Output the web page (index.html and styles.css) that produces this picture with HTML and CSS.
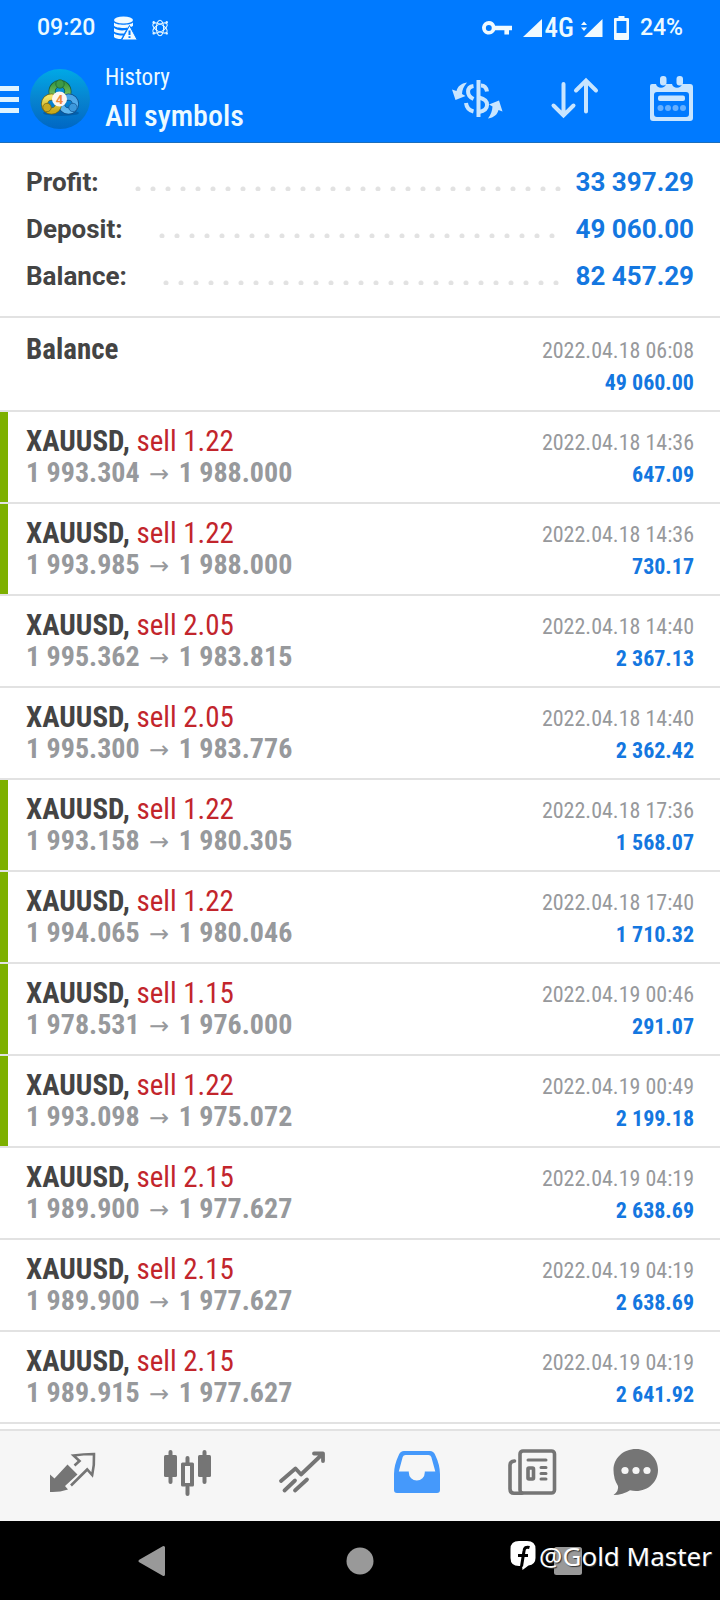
FILE: index.html
```html
<!DOCTYPE html>
<html lang="en">
<head>
<meta charset="utf-8">
<meta name="viewport" content="width=device-width, initial-scale=1">
<title>History</title>
<link rel="stylesheet" href="styles.css">
</head>
<body>
<div class="screen">
  <header class="top">
    <div class="status">
      <div class="status-left">
        <span>09:20</span>
        <svg class="st-db" viewBox="0 0 24 24" width="24" height="24" aria-hidden="true">
          <ellipse cx="10.500" cy="4" rx="9.500" ry="3.600" fill="#f0faff"/>
          <path d="M1 6.500c2 3 17 3 19 0v3.200c-2 3-17 3-19 0zM1 12c3 2.500 8 2.800 12 2l-2 3.500c-4 .2-8-.4-10-2zM1 17.500c2 1.500 5 2 9 2l-2 3.500c-3 0-6-.6-7-2z" fill="#f0faff"/>
          <path d="M16.500 9.500L24.300 24H8.700z" fill="#f0faff" stroke="#007aff" stroke-width="1"/>
          <path d="M16.500 14.500v4.500M16.500 20.300v1.800" stroke="#007aff" stroke-width="2"/>
        </svg>
        <svg class="st-atom" viewBox="0 0 20 20" width="18" height="20" fill="none" stroke="#e4f6ff" stroke-width="1.200" aria-hidden="true">
          <ellipse cx="10" cy="10" rx="4" ry="8.600"/>
          <ellipse cx="10" cy="10" rx="4" ry="9" transform="rotate(60 10 10)"/>
          <ellipse cx="10" cy="10" rx="4" ry="9" transform="rotate(120 10 10)"/>
          <circle cx="10" cy="10" r="3.400" fill="#007aff" stroke="none"/>
          <g fill="#e4f6ff" stroke="none"><circle cx="3" cy="3.500" r="1.300"/><circle cx="17.500" cy="3.500" r="1.300"/><circle cx="3" cy="16" r="1.300"/><circle cx="17.500" cy="16" r="1.300"/></g>
        </svg>
      </div>
      <div class="status-right">
        <svg viewBox="0 0 30 14" width="30" height="14" aria-hidden="true"><path fill="#f0faff" fill-rule="evenodd" d="M6.800 0a6.800 6.800 0 0 1 6.400 4.800H30v4.400h-3V13.500h-4.600V9.200h-9.200A6.800 6.800 0 1 1 6.800 0zm0 4a2.900 2.900 0 1 0 0 5.900 2.900 2.900 0 0 0 0-5.900z"/></svg>
        <span class="signal">
          <svg viewBox="0 0 19 18" width="19" height="18" aria-hidden="true"><path d="M19 0v18H0z" fill="#f0faff"/></svg>
          <span class="net">4G</span>
          <svg class="sig2" viewBox="0 0 22 18" width="22" height="18" aria-hidden="true"><path d="M21.500 0v18H3zM0 6l3-3.500L6 6zM0 8.500l3 3.500 3-3.500z" fill="#f0faff"/></svg>
        </span>
        <svg viewBox="0 0 15 24" width="15" height="24" aria-hidden="true"><path fill="#f0faff" fill-rule="evenodd" d="M4.500 0h6v2H14a1 1 0 0 1 1 1v20a1 1 0 0 1-1 1H1a1 1 0 0 1-1-1V3a1 1 0 0 1 1-1h3.500zM2.600 5v12h9.800V5z"/></svg>
        <span>24%</span>
      </div>
    </div>
    <div class="appbar">
      <button class="menu" aria-label="Menu"><span></span><span></span><span></span></button>
      <svg class="logo" viewBox="0 0 60 60" width="60" height="60" role="img" aria-label="MetaTrader 4">
        <defs>
          <linearGradient id="bg" x1="0" y1="0" x2="0" y2="1"><stop offset="0" stop-color="#00a9e6"/><stop offset=".5" stop-color="#0784d0"/><stop offset="1" stop-color="#0067c4"/></linearGradient>
          <linearGradient id="gr" x1="0" y1="0" x2="0" y2="1"><stop offset="0" stop-color="#3c9a40"/><stop offset="1" stop-color="#8fce6a"/></linearGradient>
          <linearGradient id="ye" x1="0" y1="0" x2="0" y2="1"><stop offset="0" stop-color="#f0e46a"/><stop offset="1" stop-color="#c9a91c"/></linearGradient>
          <linearGradient id="bl" x1="0" y1="0" x2="0" y2="1"><stop offset="0" stop-color="#4ba6e8"/><stop offset="1" stop-color="#62b8f0"/></linearGradient>
        </defs>
        <circle cx="30" cy="30" r="30" fill="url(#bg)"/>
        <ellipse cx="31" cy="44" rx="18" ry="3" fill="#003f80" opacity=".4"/>
        <circle cx="30" cy="22.500" r="8" fill="none" stroke="#1c5a3a" stroke-width="7"/>
        <circle cx="30" cy="22.500" r="8" fill="none" stroke="url(#gr)" stroke-width="5.500"/>
        <circle cx="38.500" cy="35" r="7" fill="none" stroke="#0f4b86" stroke-width="7"/>
        <circle cx="38.500" cy="35" r="7" fill="none" stroke="url(#bl)" stroke-width="5.500"/>
        <circle cx="21.500" cy="35" r="7" fill="none" stroke="#6c671a" stroke-width="7"/>
        <circle cx="21.500" cy="35" r="7" fill="none" stroke="url(#ye)" stroke-width="5.500"/>
        <circle cx="30" cy="15" r="4.200" fill="#3d9a47" stroke="#1d6435" stroke-width=".8"/>
        <circle cx="17" cy="38.500" r="4.200" fill="#c9aa22" stroke="#7b6a15" stroke-width=".8"/>
        <circle cx="43" cy="38.500" r="4.200" fill="#3c98dc" stroke="#165a98" stroke-width=".8"/>
        <circle cx="29.500" cy="30" r="7.500" fill="#fdf6f0"/>
        <text x="29.500" y="34.500" class="logo-num">4</text>
      </svg>
      <div class="titles">
        <div class="section">History</div>
        <h1>All symbols</h1>
      </div>
      <div class="actions">
        <button aria-label="Currency">
          <svg viewBox="0 0 48 48" width="48" height="48" fill="none" stroke="#c8e5ff" stroke-width="4">
            <path d="M24.500 5v37"/>
            <path d="M19.500 11c-7 1-7.500 9.500 0 13"/><path d="M27 10.500q5 0 6 6"/><path d="M25 22.500c11 2.500 10.500 12.500 0 14.500"/><path d="M12 28c.6 5 3.500 7.500 7.500 8.500"/>
            <g fill="#c8e5ff" stroke="none"><path d="M13 7.500C7 8.500 3.500 11.500 2.500 16L-2 14.500l3.500 10.500 10-4-3.500-2c.2-4 1.500-7.500 5-11.500z"/><path d="M34 43.500c6-1 9.500-4 10.500-8.500l4 1.500-3.500-11-10 4 3.500 2c-.2 4-1.500 8-4.500 12z"/></g>
          </svg>
        </button>
        <button aria-label="Sort">
          <svg viewBox="0 0 48 48" width="48" height="48" fill="none" stroke="#c8e5ff" stroke-width="4" stroke-linecap="round" stroke-linejoin="miter">
            <path d="M12.500 9v31M2.500 30.500l10 10 10-10M35 36.500V6M25 15.500l10-10 10 10"/>
          </svg>
        </button>
        <button aria-label="Period">
          <svg viewBox="0 0 48 48" width="48" height="48">
            <path fill="#c8e5ff" fill-rule="evenodd" d="M4 9h4a5.200 5.200 0 0 0 10 0h6a5.200 5.200 0 0 0 10 0h8q3 0 3 3v31q0 3-3 3H5q-3 0-3-3V11q0-2 2-2zM9 17q-3 0-3 3v19q0 3 3 3h29q3 0 3-3V20q0-3-3-3z"/>
            <rect x="12" y="1" width="6.500" height="9.500" rx="3" fill="#c8e5ff"/><rect x="28.500" y="1" width="6.500" height="9.500" rx="3" fill="#c8e5ff"/>
            <rect x="10" y="20.500" width="27" height="5.500" rx="2" fill="#c8e5ff"/>
            <g fill="#66b0ff"><circle cx="12.500" cy="33" r="3"/><circle cx="20" cy="33" r="3"/><circle cx="27.500" cy="33" r="3"/><circle cx="35" cy="33" r="3"/></g>
          </svg>
        </button>
      </div>
    </div>
  </header>

  <main>
    <dl class="summary">
      <div><dt>Profit:</dt><dd>33 397.29</dd></div>
      <div><dt>Deposit:</dt><dd>49 060.00</dd></div>
      <div><dt>Balance:</dt><dd>82 457.29</dd></div>
    </dl>
    <ul class="deals">
      <li class="first"><div class="deal"><b>Balance</b></div><div class="result"><time>2022.04.18 06:08</time><strong>49 060.00</strong></div></li>
      <li class="tp"><div class="deal"><b>XAUUSD,</b> <em>sell 1.22</em><p>1 993.304 <i>→</i> 1 988.000</p></div><div class="result"><time>2022.04.18 14:36</time><strong>647.09</strong></div></li>
      <li class="tp"><div class="deal"><b>XAUUSD,</b> <em>sell 1.22</em><p>1 993.985 <i>→</i> 1 988.000</p></div><div class="result"><time>2022.04.18 14:36</time><strong>730.17</strong></div></li>
      <li><div class="deal"><b>XAUUSD,</b> <em>sell 2.05</em><p>1 995.362 <i>→</i> 1 983.815</p></div><div class="result"><time>2022.04.18 14:40</time><strong>2 367.13</strong></div></li>
      <li><div class="deal"><b>XAUUSD,</b> <em>sell 2.05</em><p>1 995.300 <i>→</i> 1 983.776</p></div><div class="result"><time>2022.04.18 14:40</time><strong>2 362.42</strong></div></li>
      <li class="tp"><div class="deal"><b>XAUUSD,</b> <em>sell 1.22</em><p>1 993.158 <i>→</i> 1 980.305</p></div><div class="result"><time>2022.04.18 17:36</time><strong>1 568.07</strong></div></li>
      <li class="tp"><div class="deal"><b>XAUUSD,</b> <em>sell 1.22</em><p>1 994.065 <i>→</i> 1 980.046</p></div><div class="result"><time>2022.04.18 17:40</time><strong>1 710.32</strong></div></li>
      <li class="tp"><div class="deal"><b>XAUUSD,</b> <em>sell 1.15</em><p>1 978.531 <i>→</i> 1 976.000</p></div><div class="result"><time>2022.04.19 00:46</time><strong>291.07</strong></div></li>
      <li class="tp"><div class="deal"><b>XAUUSD,</b> <em>sell 1.22</em><p>1 993.098 <i>→</i> 1 975.072</p></div><div class="result"><time>2022.04.19 00:49</time><strong>2 199.18</strong></div></li>
      <li><div class="deal"><b>XAUUSD,</b> <em>sell 2.15</em><p>1 989.900 <i>→</i> 1 977.627</p></div><div class="result"><time>2022.04.19 04:19</time><strong>2 638.69</strong></div></li>
      <li><div class="deal"><b>XAUUSD,</b> <em>sell 2.15</em><p>1 989.900 <i>→</i> 1 977.627</p></div><div class="result"><time>2022.04.19 04:19</time><strong>2 638.69</strong></div></li>
      <li><div class="deal"><b>XAUUSD,</b> <em>sell 2.15</em><p>1 989.915 <i>→</i> 1 977.627</p></div><div class="result"><time>2022.04.19 04:19</time><strong>2 641.92</strong></div></li>
    </ul>
  </main>

  <nav class="tabs">
    <button aria-label="Quotes"><svg viewBox="0 0 48 48" width="48" height="48">
      <path fill="#757575" d="M2 22.500l4.500 4L19.500 12.500 29.500 22.500 17 34l3 3.500Q11 40.500 2 40z"/>
      <path fill="none" stroke="#757575" stroke-width="2.600" d="M26.500 13.500l5-4.500-6-5.500q10-1.500 20.500-1.500.5 11-1.800 21l-5-5.500L23 33.500"/></svg></button>
    <button aria-label="Charts"><svg viewBox="0 0 48 48" width="48" height="48" fill="#757575">
      <rect x="5.500" y="-2" width="4" height="34" rx="2"/><rect x="1" y="3" width="13" height="22" rx="1.500"/>
      <rect x="39.500" y="-2" width="4" height="34" rx="2"/><rect x="35" y="3" width="13" height="22" rx="1.500"/>
      <rect x="22.500" y="4" width="4" height="9" rx="2"/><rect x="22.500" y="33" width="4" height="11" rx="2"/>
      <path fill-rule="evenodd" d="M19.500 10.500h10q1.500 0 1.500 1.500v21q0 1.500-1.500 1.500h-10q-1.500 0-1.500-1.500V12q0-1.500 1.500-1.500zM22 14v17h5V14z"/></svg></button>
    <button aria-label="Trade"><svg viewBox="0 0 48 48" width="48" height="48" fill="none" stroke="#757575" stroke-width="3.800" stroke-linecap="round" stroke-linejoin="round">
      <path d="M3 29L17.500 16.500 23 22.500 44.500 2M36 1.500h9V9M6.500 38.500L17 28.500M17 38.500L29 27.500"/></svg></button>
    <button class="active" aria-label="History" aria-current="page"><svg viewBox="0 0 48 48" width="48" height="48">
      <path fill="#4599fb" fill-rule="evenodd" d="M11 -1h26q3.500 0 5 3.500Q47 13 47 22v16q0 3-3 3H4q-3 0-3-3V22Q1 13 6 2.500 7.500-1 11-1zM12.500 3q-2 0-2.800 2L5.800 19.500h10v1a8 8 0 0 0 16 0v-1h10.500L38.300 5q-.8-2-2.800-2z"/></svg></button>
    <button aria-label="News"><svg viewBox="0 0 48 48" width="48" height="48" fill="none" stroke="#757575" stroke-width="3.600" stroke-linecap="round">
      <rect x="12" y="-1" width="34.500" height="42" rx="3"/><path d="M6.500 9Q2 9.500 2 13v24q0 4.200 4 4.200h8"/>
      <path stroke-width="3" d="M20 8h18M33 15.500h5M33 21.500h5M33 27h5"/><rect x="20" y="16" width="5.500" height="11" rx="1"/></svg></button>
    <button aria-label="Messages"><svg viewBox="0 0 48 48" width="48" height="48">
      <path fill="#757575" d="M24-3C37-3 46 6.500 46 18S36.500 39 24 39q-3 0-6-.8Q11 43 1.500 43q5.500-4 4.500-9Q1.500 27 1.500 18C1.500 6.500 11-3 24-3z"/>
      <g fill="#f6f6f6"><circle cx="13" cy="18.500" r="3.600"/><circle cx="24" cy="18.500" r="3.600"/><circle cx="35" cy="18.500" r="3.600"/></g></svg></button>
  </nav>

  <footer class="sysnav">
    <button aria-label="Back"><svg viewBox="0 0 30 32" width="30" height="32"><path d="M3 16L26.500 2.500v27z" fill="#999" stroke="#999" stroke-width="3" stroke-linejoin="round"/></svg></button>
    <button aria-label="Home"><svg viewBox="0 0 28 28" width="28" height="28"><circle cx="14" cy="14" r="13.500" fill="#999"/></svg></button>
    <button aria-label="Recent apps"><svg viewBox="0 0 30 30" width="30" height="30"><rect x="1" y="1" width="28" height="28" rx="2.500" fill="#999"/></svg></button>
    <div class="watermark">
      <svg viewBox="0 0 26 30" width="26" height="30" aria-hidden="true"><path fill="#fff" d="M9 0h8q8.500 0 8.500 8v9q0 6.500-7 7.500L12.500 29l-.5-4H9Q.5 25 .5 17V8Q.5 0 9 0z"/><path d="M19.500 6.500q-5-1.500-5.500 3.500L11.500 25.500M8 14.500h10" fill="none" stroke="#000" stroke-width="3"/></svg>
      <span>@Gold Master</span>
    </div>
  </footer>
</div>
</body>
</html>
```
FILE: styles.css
```css
* { box-sizing: border-box; }
body, h1, p, ul, dl, dd { margin: 0; padding: 0; }
body { background: #000; font-family: "Roboto Condensed", Roboto, sans-serif; color: #444; }
button { border: 0; background: none; padding: 0; margin: 0; font: inherit; cursor: pointer; }
svg { display: block; overflow: visible; flex: none; }
.screen { min-height: 100vh; display: flex; flex-direction: column; background: #fff; }

.top { background: #007aff; color: #ecfaff; border-bottom: 1px solid #1c6ebb; }
.status { height: 56px; padding: 0 37px; display: flex; align-items: center; justify-content: space-between; font: 500 23px/28px Roboto, sans-serif; }
.status-left, .status-right, .signal { display: flex; align-items: center; }
.st-db { margin-left: 18px; }
.st-atom { margin-left: 14px; }
.status-right { gap: 11px; }
.signal { gap: 3px; }
.sig2 { margin-left: 4px; }
.net { font: 500 27px/28px "Roboto Condensed", sans-serif; }

.appbar { display: flex; align-items: center; height: 86px; }
.menu { display: flex; flex-direction: column; gap: 6px; width: 19px; margin-right: 11px; }
.menu span { display: block; height: 5px; width: 19px; background: #dff4ff; }
.logo-num { font: 700 13px Roboto, sans-serif; fill: #f08a3c; text-anchor: middle; }
.titles { margin-left: 15px; }
.section { font-size: 23px; line-height: 34px; }
h1 { font-size: 30px; line-height: 42px; font-weight: 500; }
.actions { margin-left: auto; display: flex; }
.actions button { width: 97px; display: flex; justify-content: center; }

.summary { padding: 16px 26px; border-bottom: 2px solid #e2e2e2; font: 700 26px/47px Roboto, sans-serif; }
.summary div { display: flex; align-items: center; }
.summary div::before {
  content: ""; order: 1; flex: 1; height: 5px; margin: 12px 14px 0 36px;
  background: radial-gradient(circle at 3px 3px, #e2e2e2 2px, transparent 3px) 0 0 / 15px 5px repeat-x;
}
.summary dd { order: 2; color: #1477e0; }

.deals { list-style: none; }
.deals li { display: flex; justify-content: space-between; min-height: 92px; padding: 13px 26px 11px; border-bottom: 2px solid #e2e2e2; font-size: 29px; line-height: 32px; }
.deals .first { min-height: 94px; padding-top: 15px; }
.deals .tp { background: linear-gradient(#7db000, #7db000) 0 0 / 8px 100% no-repeat; }
.deal b { font-weight: 700; }
.deal em { font-style: normal; color: #c2252c; }
.deal p { color: #97999c; font-size: 28px; font-weight: 700; }
.deal i { font: 400 24px/32px "DejaVu Sans", sans-serif; margin: 0 3px; }
.result { display: flex; flex-direction: column; padding-top: 2px; text-align: right; font-size: 22px; }
.result time { color: #97999c; }
.result strong { color: #1477e0; font-weight: 700; }

.tabs { margin-top: auto; height: 92px; padding: 0 38px 0 14px; display: flex; background: #f6f6f6; border-top: 2px solid #e2e2e2; }
.tabs button { flex: 5; display: flex; justify-content: center; align-items: center; }
.tabs button:last-child { flex: 4; }

.sysnav { position: relative; height: 79px; padding: 0 48px; display: flex; background: #000; }
.sysnav button { flex: 1; display: flex; justify-content: center; align-items: center; }
.watermark { position: absolute; right: 8px; bottom: 24px; display: flex; align-items: center; gap: 3px; color: #fff; font: 400 26px/40px "Noto Sans", sans-serif; text-shadow: 1px 1px 1px #333; }
```
